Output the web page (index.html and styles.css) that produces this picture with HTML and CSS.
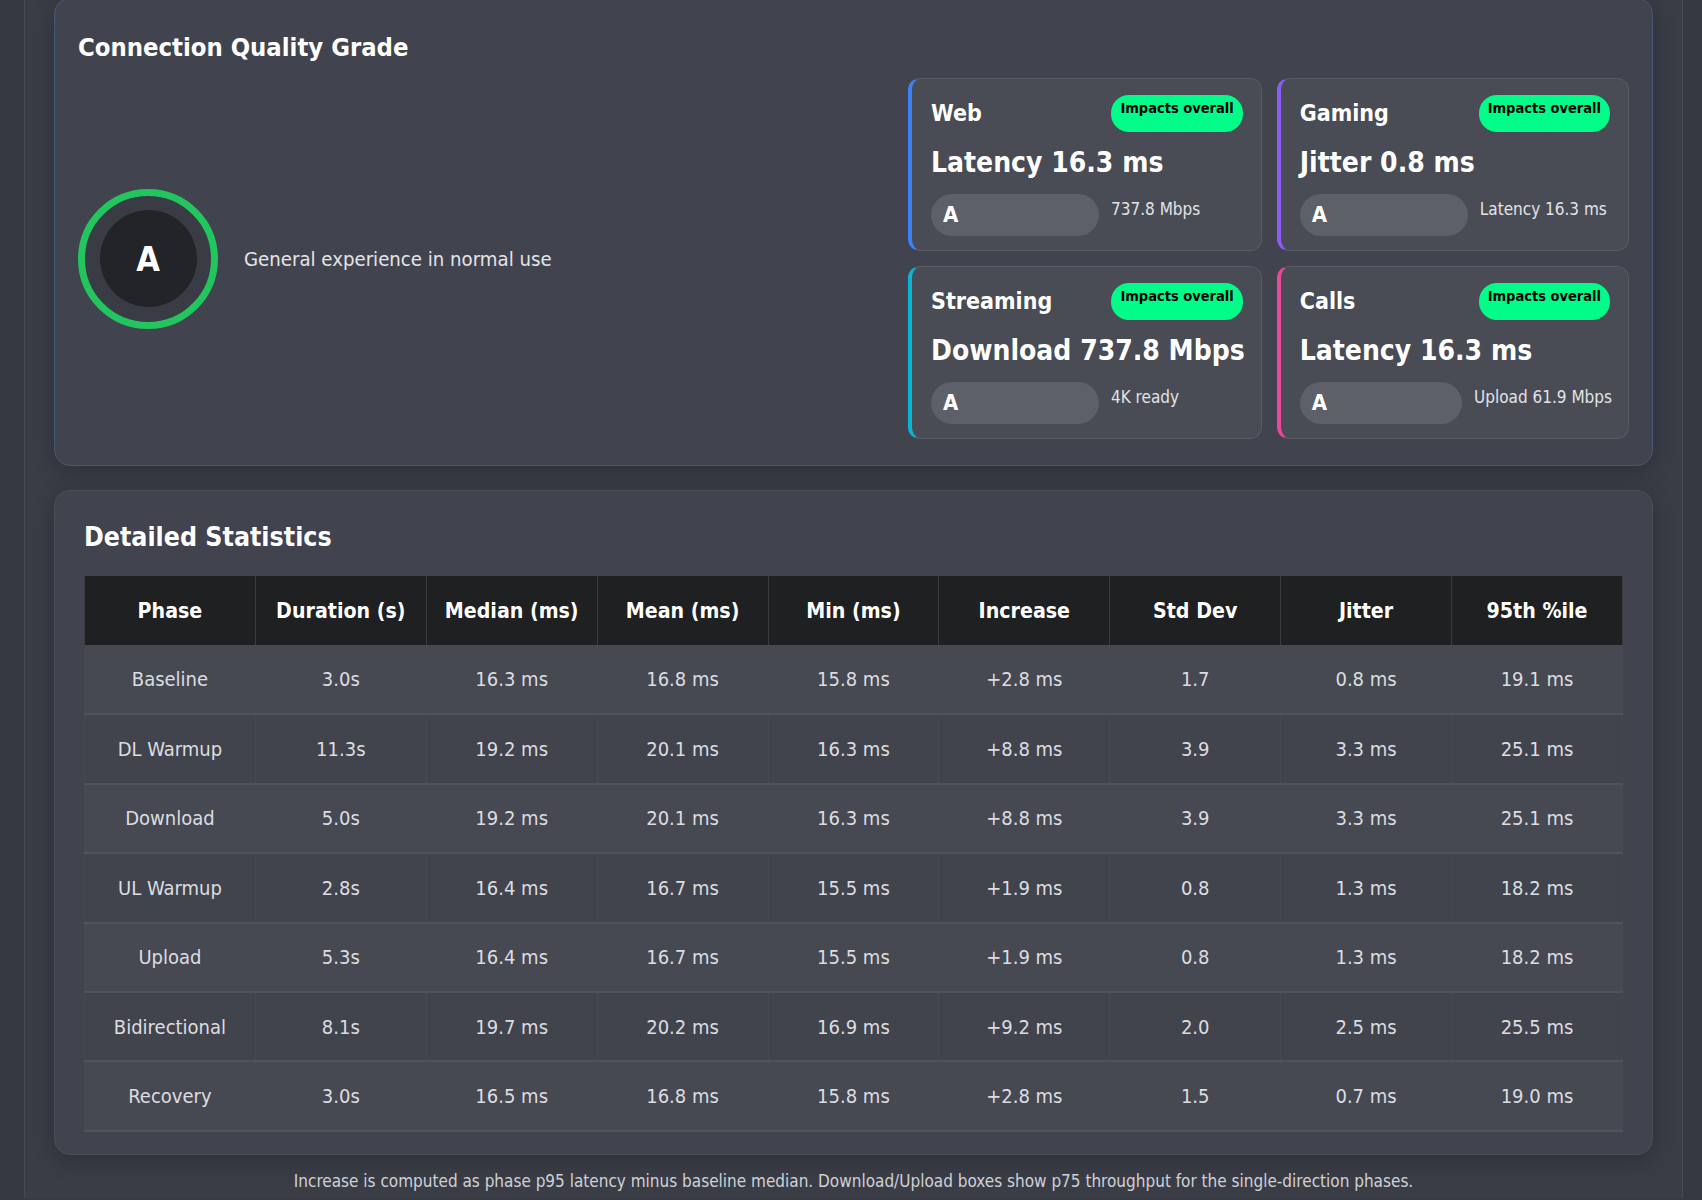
FILE: index.html
```html
<!DOCTYPE html>
<html lang="en">
<head>
<meta charset="utf-8">
<title>Connection Quality</title>
<link rel="stylesheet" href="styles.css">
</head>
<body>
<div class="page">
  <section class="card grade-card">
    <h2 class="card-title">Connection Quality Grade</h2>
    <div class="grade-body">
      <div class="overall">
        <div class="ring"><div class="ring-inner">A</div></div>
        <p class="overall-text">General experience in normal use</p>
      </div>
      <div class="tiles">
        <div class="tile tile-web">
          <div class="tile-head"><h3>Web</h3><span class="badge">Impacts overall</span></div>
          <div class="tile-value">Latency 16.3 ms</div>
          <div class="tile-foot"><div class="pill">A</div><span class="detail">737.8 Mbps</span></div>
        </div>
        <div class="tile tile-gaming">
          <div class="tile-head"><h3>Gaming</h3><span class="badge">Impacts overall</span></div>
          <div class="tile-value">Jitter 0.8 ms</div>
          <div class="tile-foot"><div class="pill">A</div><span class="detail">Latency 16.3 ms</span></div>
        </div>
        <div class="tile tile-stream">
          <div class="tile-head"><h3>Streaming</h3><span class="badge">Impacts overall</span></div>
          <div class="tile-value">Download 737.8 Mbps</div>
          <div class="tile-foot"><div class="pill">A</div><span class="detail">4K ready</span></div>
        </div>
        <div class="tile tile-calls">
          <div class="tile-head"><h3>Calls</h3><span class="badge">Impacts overall</span></div>
          <div class="tile-value">Latency 16.3 ms</div>
          <div class="tile-foot"><div class="pill">A</div><span class="detail">Upload 61.9 Mbps</span></div>
        </div>
      </div>
    </div>
  </section>

  <section class="card stats-card">
    <h2 class="stats-title">Detailed Statistics</h2>
    <table class="stats">
      <thead>
        <tr><th>Phase</th><th>Duration (s)</th><th>Median (ms)</th><th>Mean (ms)</th><th>Min (ms)</th><th>Increase</th><th>Std Dev</th><th>Jitter</th><th>95th %ile</th></tr>
      </thead>
      <tbody>
        <tr><td>Baseline</td><td>3.0s</td><td>16.3 ms</td><td>16.8 ms</td><td>15.8 ms</td><td>+2.8 ms</td><td>1.7</td><td>0.8 ms</td><td>19.1 ms</td></tr>
        <tr><td>DL Warmup</td><td>11.3s</td><td>19.2 ms</td><td>20.1 ms</td><td>16.3 ms</td><td>+8.8 ms</td><td>3.9</td><td>3.3 ms</td><td>25.1 ms</td></tr>
        <tr><td>Download</td><td>5.0s</td><td>19.2 ms</td><td>20.1 ms</td><td>16.3 ms</td><td>+8.8 ms</td><td>3.9</td><td>3.3 ms</td><td>25.1 ms</td></tr>
        <tr><td>UL Warmup</td><td>2.8s</td><td>16.4 ms</td><td>16.7 ms</td><td>15.5 ms</td><td>+1.9 ms</td><td>0.8</td><td>1.3 ms</td><td>18.2 ms</td></tr>
        <tr><td>Upload</td><td>5.3s</td><td>16.4 ms</td><td>16.7 ms</td><td>15.5 ms</td><td>+1.9 ms</td><td>0.8</td><td>1.3 ms</td><td>18.2 ms</td></tr>
        <tr><td>Bidirectional</td><td>8.1s</td><td>19.7 ms</td><td>20.2 ms</td><td>16.9 ms</td><td>+9.2 ms</td><td>2.0</td><td>2.5 ms</td><td>25.5 ms</td></tr>
        <tr><td>Recovery</td><td>3.0s</td><td>16.5 ms</td><td>16.8 ms</td><td>15.8 ms</td><td>+2.8 ms</td><td>1.5</td><td>0.7 ms</td><td>19.0 ms</td></tr>
      </tbody>
    </table>
  </section>

  <p class="note">Increase is computed as phase p95 latency minus baseline median. Download/Upload boxes show p75 throughput for the single-direction phases.</p>
</div>
</body>
</html>
```

FILE: styles.css
```css
* { box-sizing: border-box; }
html, body { margin: 0; padding: 0; }
body {
  background: #363942;
  font-family: "DejaVu Sans Condensed", "DejaVu Sans", sans-serif;
  color: #e6e7ea;
  height: 1200px;
  overflow: hidden;
}
.page {
  margin-left: 24px;
  width: 1659px;
  min-height: 1200px;
  background: #3a3d46;
  border-left: 1px solid #474a54;
  border-right: 1px solid #474a54;
  padding: 0 29px;
}
.card {
  background: #41444e;
  border-radius: 16px;
  box-shadow: 0 6px 22px rgba(0, 0, 0, 0.22);
}
.grade-card {
  margin-top: -2px;
  border: 1px solid #475876;
  padding: 24px 23px 26px;
}
.card-title {
  margin: 8px 0 15px;
  font-size: 25.4px;
  line-height: 32px;
  font-weight: bold;
  color: #ffffff;
}
.grade-body {
  display: flex;
  align-items: center;
}
.overall {
  flex: 1;
  display: flex;
  align-items: center;
  gap: 26px;
}
.ring {
  width: 140px;
  height: 140px;
  border-radius: 50%;
  border: 7px solid #22c55e;
  background: #393c44;
  display: flex;
  align-items: center;
  justify-content: center;
}
.ring-inner {
  width: 97px;
  height: 97px;
  border-radius: 50%;
  background: #232428;
  display: flex;
  align-items: center;
  justify-content: center;
  color: #ffffff;
  font-weight: bold;
  font-size: 34px;
}
.overall-text {
  margin: 0;
  font-size: 20.2px;
  color: #e4e5e8;
}
.tiles {
  width: 721px;
  display: grid;
  grid-template-columns: 1fr 1fr;
  gap: 15px;
}
.tile {
  height: 173px;
  background: #494c55;
  border: 1px solid #575b64;
  border-left: 4px solid #3b82f6;
  border-radius: 12px;
  padding: 16px 16px 14px 19px;
}
.tile-web { border-left-color: #3b82f6; }
.tile-gaming { border-left-color: #8b5cf6; }
.tile-stream { border-left-color: #06b6d4; }
.tile-calls { border-left-color: #ec4899; }
.tile-head {
  display: flex;
  justify-content: space-between;
  height: 37px;
}
.tile-head h3 {
  margin: 0;
  font-size: 23px;
  line-height: 37px;
  color: #ffffff;
}
.badge {
  background: #00fd89;
  color: #000000;
  font-weight: bold;
  font-size: 14.5px;
  line-height: 18px;
  padding: 4px 9px;
  margin-right: 2px;
  border-radius: 18px;
}
.tile-value {
  margin: 14px 0 14px;
  font-size: 28px;
  line-height: 34px;
  font-weight: bold;
  color: #ffffff;
  white-space: nowrap;
}
.tile-foot {
  display: flex;
  align-items: flex-start;
  gap: 12px;
}
.pill {
  flex: 0 1 168px;
  height: 42px;
  border-radius: 21px;
  background: #5d6068;
  color: #ffffff;
  font-weight: bold;
  font-size: 22px;
  line-height: 42px;
  padding-left: 12px;
}
.detail {
  flex: none;
  margin-top: 5px;
  font-size: 17px;
  line-height: 20px;
  color: #e2e3e6;
  white-space: nowrap;
}
.stats-card {
  margin-top: 24px;
  border: 1px solid #4b4e58;
  padding: 24px 29px 22px;
}
.stats-title {
  margin: 4px 0 21px;
  font-size: 26.5px;
  line-height: 36px;
  color: #ffffff;
}
.stats {
  width: 100%;
  table-layout: fixed;
  border-collapse: collapse;
}
.stats th {
  height: 69px;
  background: #1f2022;
  color: #ffffff;
  font-size: 21.2px;
  font-weight: bold;
  border-left: 1px solid #3a3b3e;
  border-right: 1px solid #3a3b3e;
  text-align: center;
}
.stats td {
  height: 69.4px;
  text-align: center;
  font-size: 20px;
  color: #dcdde0;
  border-bottom: 2px solid #50535c;
  border-left: 1px solid #464952;
  border-right: 1px solid #464952;
}
.stats tbody tr:nth-child(odd) td { background: #464952; }
.stats tbody tr:nth-child(even) td { background: #41444d; }
.note {
  margin: 16px 0 0;
  text-align: center;
  font-size: 17px;
  line-height: 20px;
  color: #cfd1d6;
}
```
